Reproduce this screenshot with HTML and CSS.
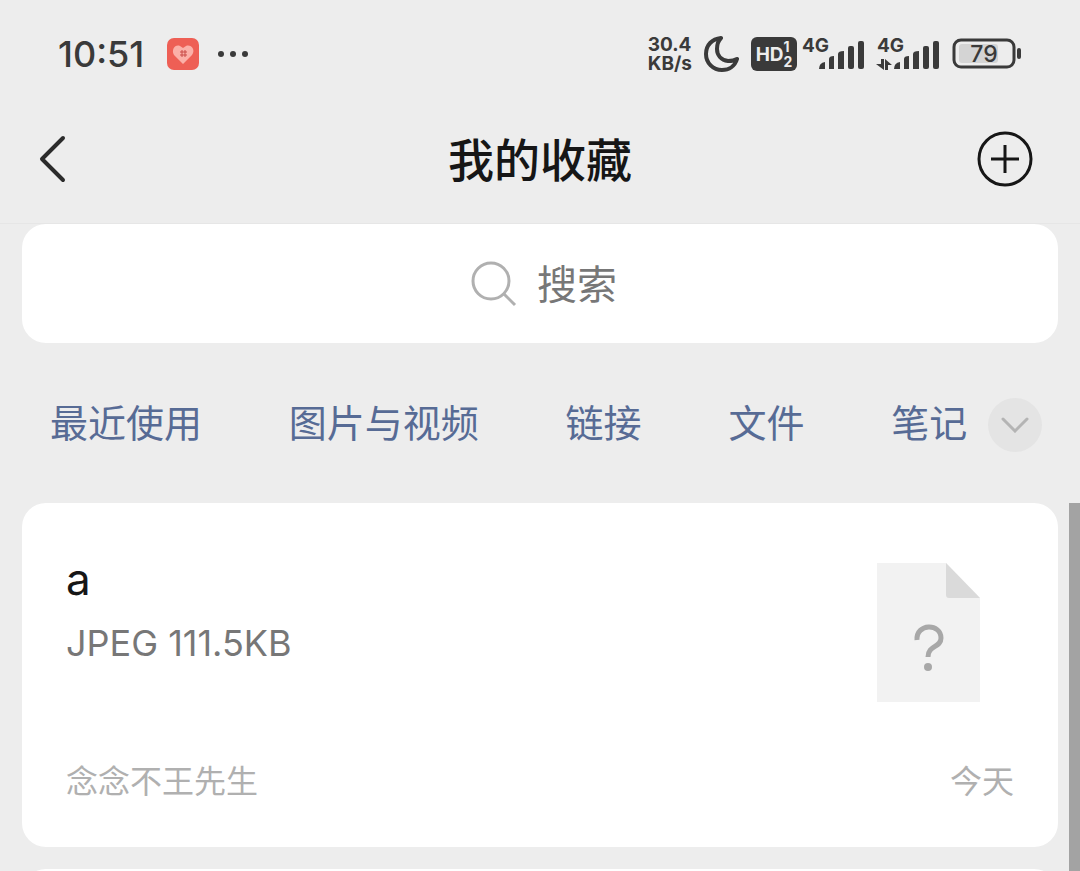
FILE: index.html
```html
<!DOCTYPE html>
<html lang="zh-CN">

<head>
  <meta charset="UTF-8" />
  <meta name="viewport" content="width=device-width, initial-scale=1.0" />
  <title>我的收藏</title>
  <link rel="stylesheet" href="styles.css">
</head>

<body>
  <!-- 状态栏 -->
  <div class="status-bar">
    <span class="time">10:51</span>
    <svg class="app-badge" width="32" height="32" viewBox="0 0 32 32">
      <rect width="32" height="32" rx="7" fill="#ee5f55" />
      <path d="M16 26 L7 17 C4 12 8 6 13 8 L16 10 L19 8 C24 6 29 12 25 17 Z" fill="#fbb0a8" />
      <path d="M15 12v7M18 12v7M13 14h7M13 17h7" stroke="#c94c48" stroke-width="1" />
    </svg>
    <svg class="more" width="32" height="8" viewBox="0 0 32 8" fill="#3a3a3a">
      <circle cx="4" cy="4" r="3" />
      <circle cx="16" cy="4" r="3" />
      <circle cx="28" cy="4" r="3" />
    </svg>

    <div class="status-right">
      <div class="speed"><span>30.4</span><span>KB/s</span></div>
      <svg class="moon" width="35" height="36" viewBox="0 0 35 36">
        <path d="M17 2 C8 3 2 9 2 18 C2 27 9 34 18 34 C25 34 31 30 33 23 C30 25 27 25 24 25 C17 24 13 19 13 13 C13 9 14 5 17 2 Z" fill="none" stroke="#3a3a3a" stroke-width="4" stroke-linejoin="round" />
      </svg>
      <div class="hd">
        <span>HD</span>
        <div class="hd-sim"><span>1</span><span>2</span></div>
      </div>
      <svg class="signal" width="62" height="50" viewBox="0 -8 62 50" fill="#3a3a3a">
        <text x="0" y="15" class="net">4G</text>
        <path d="M17 32 q0 -6 6 -7 v7 z" />
        <path d="M27 32 v-10 q0 -3 5 -3 v13 z" />
        <path d="M36 32 v-15 q0 -3 6 -3 v18 z" />
        <rect x="46" y="9" width="6" height="23" rx="2" />
        <rect x="56" y="4" width="6" height="28" rx="2" />
      </svg>
      <svg class="signal second" width="64" height="50" viewBox="0 -8 64 50" fill="#3a3a3a">
        <text x="1" y="15" class="net">4G</text>
        <path d="M5 22h3v11l-8 -6h5z" />
        <path d="M9 33h3v-5h4l-7 -6z" />
        <path d="M18 32 q0 -6 6 -7 v7 z" />
        <path d="M28 32 v-10 q0 -3 5 -3 v13 z" />
        <path d="M37 32 v-15 q0 -3 6 -3 v18 z" />
        <rect x="47" y="9" width="6" height="23" rx="2" />
        <rect x="57" y="4" width="6" height="28" rx="2" />
      </svg>
      <svg class="battery" width="70" height="32" viewBox="0 0 70 32">
        <rect x="2" y="2" width="60" height="27" rx="7" fill="none" stroke="#3a3a3a" stroke-width="3" />
        <rect x="7" y="6" width="39" height="19" rx="3" fill="#d4d4d4" />
        <rect x="65" y="10" width="4" height="11" rx="2" fill="#3a3a3a" />
        <text x="32" y="24" text-anchor="middle" class="level">79</text>
      </svg>
    </div>
  </div>

  <!-- 标题栏 -->
  <header class="nav-bar">
    <button type="button" class="icon-btn" aria-label="返回">
      <svg width="28" height="48" viewBox="0 0 28 48">
        <path d="M24 3 L3 24 L24 45" fill="none" stroke="#2b2b2b" stroke-width="4" stroke-linecap="round" stroke-linejoin="round" />
      </svg>
    </button>
    <h1>我的收藏</h1>
    <button type="button" class="icon-btn" aria-label="添加">
      <svg width="56" height="56" viewBox="0 0 56 56">
        <circle cx="28" cy="28" r="26" fill="none" stroke="#161616" stroke-width="3" />
        <path d="M28 14v28M14 28h28" stroke="#161616" stroke-width="3" />
      </svg>
    </button>
  </header>

  <main>
    <label class="search">
      <svg width="46" height="46" viewBox="0 0 46 46">
        <circle cx="20" cy="20" r="18" fill="none" stroke="#b0b0b0" stroke-width="3" />
        <path d="M33 33 L44 44" stroke="#b0b0b0" stroke-width="3" />
      </svg>
      <input type="text" placeholder="搜索" aria-label="搜索">
    </label>

    <nav class="tabs">
      <a href="#recent">最近使用</a>
      <a href="#media">图片与视频</a>
      <a href="#links">链接</a>
      <a href="#files">文件</a>
      <a href="#notes">笔记</a>
      <button type="button" class="expand" aria-label="展开">
        <svg width="28" height="16" viewBox="0 0 28 16">
          <path d="M2 2 L14 14 L26 2" fill="none" stroke="#b4b4b4" stroke-width="3" stroke-linecap="round" />
        </svg>
      </button>
    </nav>

    <div class="list">
      <article class="card">
        <div class="card-main">
          <div>
            <h2>a</h2>
            <p class="info">JPEG 111.5KB</p>
          </div>
          <svg class="file-icon" width="103" height="139" viewBox="0 0 103 139">
            <path d="M0 0 H69 L103 35 V139 H0 Z" fill="#f2f2f2" />
            <path d="M69 0 L103 35 H72 Q69 35 69 32 Z" fill="#dadada" />
            <path d="M40 77 C39 60 64 60 64 75 C64 85 51 82 51 94" fill="none" stroke="#a8a8a8" stroke-width="5" />
            <circle cx="51" cy="104" r="4" fill="#a8a8a8" />
          </svg>
        </div>
        <div class="card-foot">
          <span>念念不王先生</span>
          <span>今天</span>
        </div>
      </article>
      <article class="card"></article>
      <div class="scrollbar"></div>
    </div>
  </main>
</body>

</html>
```
FILE: styles.css
```css
* {
  box-sizing: border-box;
}

body {
  display: flex;
  flex-direction: column;
  height: 100vh;
  margin: 0;
  overflow: hidden;
  background-color: #ededed;
  color: #161616;
  font-family: "Noto Sans CJK SC", sans-serif;
}

h1,
h2,
p {
  margin: 0;
  font-weight: normal;
}

a {
  text-decoration: none;
}

button {
  padding: 0;
  border: none;
  background: none;
  cursor: pointer;
}

svg {
  display: block;
  flex-shrink: 0;
}

/* 状态栏 */
.status-bar {
  display: flex;
  align-items: center;
  height: 108px;
  padding: 0 58px;
  color: #3a3a3a;
  font-family: Inter, sans-serif;
}

.time {
  width: 89px;
  font-size: 36px;
  font-weight: 500;
  line-height: 44px;
}

.app-badge {
  margin-left: 20px;
}

.more {
  margin-left: 18px;
}

.status-right {
  display: flex;
  align-items: center;
  margin-left: auto;
}

.speed {
  display: flex;
  flex-direction: column;
  font-size: 19px;
  font-weight: bold;
  line-height: 19px;
}

.moon {
  margin-left: 12px;
}

.hd {
  display: flex;
  align-items: center;
  justify-content: center;
  width: 46px;
  height: 34px;
  margin-left: 12px;
  border-radius: 6px;
  background-color: #3a3a3a;
  color: #ededed;
  font-size: 19px;
  font-weight: bold;
}

.hd-sim {
  display: flex;
  flex-direction: column;
  font-size: 14px;
  line-height: 15px;
}

.signal {
  margin-left: 5px;
}

.signal.second {
  margin-left: 12px;
}

.net {
  font-size: 19px;
  font-weight: bold;
}

.battery {
  margin-left: 12px;
}

.level {
  fill: #3a3a3a;
  font-size: 23px;
  font-weight: 500;
}

/* 标题栏 */
.nav-bar {
  display: flex;
  align-items: center;
  justify-content: space-between;
  height: 116px;
  padding: 0 47px 14px 39px;
  border-bottom: 1px solid #e6e6e6;
}

.nav-bar .icon-btn {
  display: flex;
  min-width: 56px;
}

.nav-bar .icon-btn:first-child {
  width: 64px;
}

.nav-bar h1 {
  padding-bottom: 4px;
  font-size: 46px;
  font-weight: 500;
  line-height: 60px;
}

main {
  display: flex;
  flex: 1;
  flex-direction: column;
  min-height: 0;
}

/* 搜索框 */
.search {
  display: flex;
  align-items: center;
  justify-content: center;
  gap: 20px;
  height: 119px;
  margin: 0 22px;
  padding-left: 10px;
  border-radius: 24px;
  background-color: #fff;
}

.search input {
  width: 82px;
  padding: 0 0 4px;
  border: none;
  outline: none;
  font-family: inherit;
  font-size: 40px;
  line-height: 56px;
}

.search input::placeholder {
  color: #777;
}

/* 分类 */
.tabs {
  display: flex;
  align-items: center;
  justify-content: space-between;
  height: 160px;
  padding: 4px 38px 0 50px;
}

.tabs a {
  padding-bottom: 8px;
  color: #576b95;
  font-size: 38px;
  line-height: 56px;
}

.expand {
  display: flex;
  align-items: center;
  justify-content: center;
  width: 54px;
  height: 54px;
  margin-left: -66px;
  border-radius: 50%;
  background-color: #e4e4e4;
}

/* 收藏列表 */
.list {
  position: relative;
  display: flex;
  flex: 1;
  flex-direction: column;
  gap: 22px;
  min-height: 0;
  padding: 0 22px;
  overflow: hidden;
}

.card {
  flex-shrink: 0;
  min-height: 120px;
  padding: 60px 44px 44px;
  border-radius: 24px;
  background-color: #fff;
}

.card-main {
  display: flex;
  justify-content: space-between;
  padding-right: 34px;
}

.card h2 {
  margin-top: -16px;
  font-family: Inter, "Noto Sans CJK SC", sans-serif;
  font-size: 44px;
  line-height: 64px;
}

.info {
  margin-top: 4px;
  color: #777;
  font-family: Inter, "Noto Sans CJK SC", sans-serif;
  font-size: 36px;
  line-height: 56px;
}

.card-foot {
  display: flex;
  justify-content: space-between;
  margin-top: 53px;
  color: #b0b0b0;
  font-size: 32px;
  line-height: 48px;
}

.scrollbar {
  position: absolute;
  top: 0;
  right: 0;
  bottom: 0;
  width: 11px;
  background-color: #a3a3a3;
}
```
